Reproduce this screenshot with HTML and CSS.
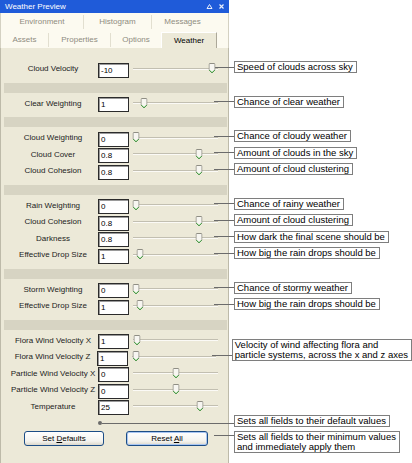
FILE: index.html
```html
<!DOCTYPE html>
<html>
<head>
<meta charset="utf-8">
<link rel="stylesheet" href="styles.css">
</head>
<body>
<div class="panel">
  <div class="titlebar">
    <span class="title">Weather Preview</span>
    <span class="tb-icons">
      <svg width="7" height="7" viewBox="0 0 7 7"><path d="M3.5 1.5L6 5.5H1z" fill="none" stroke="#e8eefc" stroke-width="1"/></svg>
      <svg width="7" height="7" viewBox="0 0 7 7"><path d="M1.5 1.5l4 4M5.5 1.5l-4 4" stroke="#e8eefc" stroke-width="1.2"/></svg>
    </span>
  </div>
  <div class="tabs">
    <div class="tabrow">
      <span class="tab tab-first tab-env">Environment</span>
      <span class="tab tab-hist">Histogram</span>
      <span class="tab tab-msg">Messages</span>
    </div>
    <div class="tabrow tabrow-bottom">
      <span class="tab tab-first tab-assets">Assets</span>
      <span class="tab tab-props">Properties</span>
      <span class="tab tab-opts">Options</span>
      <span class="tab tab-active">Weather</span>
    </div>
  </div>
  <div class="body">
    <div class="group">
      <div class="row">
        <span class="label">Cloud Velocity</span><span class="field">-10</span>
        <span class="slider"><span class="track"></span><span class="rail"><span class="thumb" style="left:96%"><svg width="7" height="11" viewBox="0 0 7 11"><path d="M1.5 0.5h4a1 1 0 0 1 1 1v5.5l-3 3-3-3v-5.5a1 1 0 0 1 1-1z" fill="#f7f6f1" stroke="#8f8e84"/><path d="M1 7.2l2.5 2.5 2.5-2.5" fill="none" stroke="#2fa52f"/></svg></span></span></span>
        <span class="note"><span class="leader"></span><span class="callout">Speed of clouds across sky</span></span>
      </div>
    </div>
    <div class="sep"></div>
    <div class="group">
      <div class="row">
        <span class="label">Clear Weighting</span><span class="field">1</span>
        <span class="slider"><span class="track"></span><span class="rail"><span class="thumb" style="left:10%"><svg width="7" height="11" viewBox="0 0 7 11"><path d="M1.5 0.5h4a1 1 0 0 1 1 1v5.5l-3 3-3-3v-5.5a1 1 0 0 1 1-1z" fill="#f7f6f1" stroke="#8f8e84"/><path d="M1 7.2l2.5 2.5 2.5-2.5" fill="none" stroke="#2fa52f"/></svg></span></span></span>
        <span class="note"><span class="leader"></span><span class="callout">Chance of clear weather</span></span>
      </div>
    </div>
    <div class="sep"></div>
    <div class="group">
      <div class="row">
        <span class="label">Cloud Weighting</span><span class="field">0</span>
        <span class="slider"><span class="track"></span><span class="rail"><span class="thumb" style="left:0%"><svg width="7" height="11" viewBox="0 0 7 11"><path d="M1.5 0.5h4a1 1 0 0 1 1 1v5.5l-3 3-3-3v-5.5a1 1 0 0 1 1-1z" fill="#f7f6f1" stroke="#8f8e84"/><path d="M1 7.2l2.5 2.5 2.5-2.5" fill="none" stroke="#2fa52f"/></svg></span></span></span>
        <span class="note"><span class="leader"></span><span class="callout">Chance of cloudy weather</span></span>
      </div>
      <div class="row">
        <span class="label">Cloud Cover</span><span class="field">0.8</span>
        <span class="slider"><span class="track"></span><span class="rail"><span class="thumb" style="left:80%"><svg width="7" height="11" viewBox="0 0 7 11"><path d="M1.5 0.5h4a1 1 0 0 1 1 1v5.5l-3 3-3-3v-5.5a1 1 0 0 1 1-1z" fill="#f7f6f1" stroke="#8f8e84"/><path d="M1 7.2l2.5 2.5 2.5-2.5" fill="none" stroke="#2fa52f"/></svg></span></span></span>
        <span class="note"><span class="leader"></span><span class="callout">Amount of clouds in the sky</span></span>
      </div>
      <div class="row">
        <span class="label">Cloud Cohesion</span><span class="field">0.8</span>
        <span class="slider"><span class="track"></span><span class="rail"><span class="thumb" style="left:80%"><svg width="7" height="11" viewBox="0 0 7 11"><path d="M1.5 0.5h4a1 1 0 0 1 1 1v5.5l-3 3-3-3v-5.5a1 1 0 0 1 1-1z" fill="#f7f6f1" stroke="#8f8e84"/><path d="M1 7.2l2.5 2.5 2.5-2.5" fill="none" stroke="#2fa52f"/></svg></span></span></span>
        <span class="note"><span class="leader"></span><span class="callout">Amount of cloud clustering</span></span>
      </div>
    </div>
    <div class="sep"></div>
    <div class="group">
      <div class="row">
        <span class="label">Rain Weighting</span><span class="field">0</span>
        <span class="slider"><span class="track"></span><span class="rail"><span class="thumb" style="left:0%"><svg width="7" height="11" viewBox="0 0 7 11"><path d="M1.5 0.5h4a1 1 0 0 1 1 1v5.5l-3 3-3-3v-5.5a1 1 0 0 1 1-1z" fill="#f7f6f1" stroke="#8f8e84"/><path d="M1 7.2l2.5 2.5 2.5-2.5" fill="none" stroke="#2fa52f"/></svg></span></span></span>
        <span class="note"><span class="leader"></span><span class="callout">Chance of rainy weather</span></span>
      </div>
      <div class="row">
        <span class="label">Cloud Cohesion</span><span class="field">0.8</span>
        <span class="slider"><span class="track"></span><span class="rail"><span class="thumb" style="left:80%"><svg width="7" height="11" viewBox="0 0 7 11"><path d="M1.5 0.5h4a1 1 0 0 1 1 1v5.5l-3 3-3-3v-5.5a1 1 0 0 1 1-1z" fill="#f7f6f1" stroke="#8f8e84"/><path d="M1 7.2l2.5 2.5 2.5-2.5" fill="none" stroke="#2fa52f"/></svg></span></span></span>
        <span class="note"><span class="leader"></span><span class="callout">Amount of cloud clustering</span></span>
      </div>
      <div class="row">
        <span class="label">Darkness</span><span class="field">0.8</span>
        <span class="slider"><span class="track"></span><span class="rail"><span class="thumb" style="left:80%"><svg width="7" height="11" viewBox="0 0 7 11"><path d="M1.5 0.5h4a1 1 0 0 1 1 1v5.5l-3 3-3-3v-5.5a1 1 0 0 1 1-1z" fill="#f7f6f1" stroke="#8f8e84"/><path d="M1 7.2l2.5 2.5 2.5-2.5" fill="none" stroke="#2fa52f"/></svg></span></span></span>
        <span class="note"><span class="leader"></span><span class="callout">How dark the final scene should be</span></span>
      </div>
      <div class="row">
        <span class="label">Effective Drop Size</span><span class="field">1</span>
        <span class="slider"><span class="track"></span><span class="rail"><span class="thumb" style="left:5%"><svg width="7" height="11" viewBox="0 0 7 11"><path d="M1.5 0.5h4a1 1 0 0 1 1 1v5.5l-3 3-3-3v-5.5a1 1 0 0 1 1-1z" fill="#f7f6f1" stroke="#8f8e84"/><path d="M1 7.2l2.5 2.5 2.5-2.5" fill="none" stroke="#2fa52f"/></svg></span></span></span>
        <span class="note"><span class="leader"></span><span class="callout">How big the rain drops should be</span></span>
      </div>
    </div>
    <div class="sep"></div>
    <div class="group">
      <div class="row">
        <span class="label">Storm Weighting</span><span class="field">0</span>
        <span class="slider"><span class="track"></span><span class="rail"><span class="thumb" style="left:0%"><svg width="7" height="11" viewBox="0 0 7 11"><path d="M1.5 0.5h4a1 1 0 0 1 1 1v5.5l-3 3-3-3v-5.5a1 1 0 0 1 1-1z" fill="#f7f6f1" stroke="#8f8e84"/><path d="M1 7.2l2.5 2.5 2.5-2.5" fill="none" stroke="#2fa52f"/></svg></span></span></span>
        <span class="note"><span class="leader"></span><span class="callout">Chance of stormy weather</span></span>
      </div>
      <div class="row">
        <span class="label">Effective Drop Size</span><span class="field">1</span>
        <span class="slider"><span class="track"></span><span class="rail"><span class="thumb" style="left:5%"><svg width="7" height="11" viewBox="0 0 7 11"><path d="M1.5 0.5h4a1 1 0 0 1 1 1v5.5l-3 3-3-3v-5.5a1 1 0 0 1 1-1z" fill="#f7f6f1" stroke="#8f8e84"/><path d="M1 7.2l2.5 2.5 2.5-2.5" fill="none" stroke="#2fa52f"/></svg></span></span></span>
        <span class="note"><span class="leader"></span><span class="callout">How big the rain drops should be</span></span>
      </div>
    </div>
    <div class="sep"></div>
    <div class="group group-last">
      <div class="row">
        <span class="label">Flora Wind Velocity X</span><span class="field">1</span>
        <span class="slider"><span class="track"></span><span class="rail"><span class="thumb" style="left:1%"><svg width="7" height="11" viewBox="0 0 7 11"><path d="M1.5 0.5h4a1 1 0 0 1 1 1v5.5l-3 3-3-3v-5.5a1 1 0 0 1 1-1z" fill="#f7f6f1" stroke="#8f8e84"/><path d="M1 7.2l2.5 2.5 2.5-2.5" fill="none" stroke="#2fa52f"/></svg></span></span></span>
      </div>
      <div class="row">
        <span class="label">Flora Wind Velocity Z</span><span class="field">1</span>
        <span class="slider"><span class="track"></span><span class="rail"><span class="thumb" style="left:1%"><svg width="7" height="11" viewBox="0 0 7 11"><path d="M1.5 0.5h4a1 1 0 0 1 1 1v5.5l-3 3-3-3v-5.5a1 1 0 0 1 1-1z" fill="#f7f6f1" stroke="#8f8e84"/><path d="M1 7.2l2.5 2.5 2.5-2.5" fill="none" stroke="#2fa52f"/></svg></span></span></span>
        <span class="note"><span class="leader"></span><span class="callout callout-raised">Velocity of wind affecting flora and<br>particle systems, across the x and z axes</span></span>
      </div>
      <div class="row">
        <span class="label">Particle Wind Velocity X</span><span class="field">0</span>
        <span class="slider"><span class="track"></span><span class="rail"><span class="thumb" style="left:51%"><svg width="7" height="11" viewBox="0 0 7 11"><path d="M1.5 0.5h4a1 1 0 0 1 1 1v5.5l-3 3-3-3v-5.5a1 1 0 0 1 1-1z" fill="#f7f6f1" stroke="#8f8e84"/><path d="M1 7.2l2.5 2.5 2.5-2.5" fill="none" stroke="#2fa52f"/></svg></span></span></span>
      </div>
      <div class="row">
        <span class="label">Particle Wind Velocity Z</span><span class="field">0</span>
        <span class="slider"><span class="track"></span><span class="rail"><span class="thumb" style="left:51%"><svg width="7" height="11" viewBox="0 0 7 11"><path d="M1.5 0.5h4a1 1 0 0 1 1 1v5.5l-3 3-3-3v-5.5a1 1 0 0 1 1-1z" fill="#f7f6f1" stroke="#8f8e84"/><path d="M1 7.2l2.5 2.5 2.5-2.5" fill="none" stroke="#2fa52f"/></svg></span></span></span>
      </div>
      <div class="row">
        <span class="label">Temperature</span><span class="field">25</span>
        <span class="slider"><span class="track"></span><span class="rail"><span class="thumb" style="left:81%"><svg width="7" height="11" viewBox="0 0 7 11"><path d="M1.5 0.5h4a1 1 0 0 1 1 1v5.5l-3 3-3-3v-5.5a1 1 0 0 1 1-1z" fill="#f7f6f1" stroke="#8f8e84"/><path d="M1 7.2l2.5 2.5 2.5-2.5" fill="none" stroke="#2fa52f"/></svg></span></span></span>
      </div>
    </div>
    <div class="defaults-row">
      <span class="dot"></span><span class="leader leader-long"></span><span class="callout">Sets all fields to their default values</span>
    </div>
    <div class="button-row">
      <span class="btn">Set <u>D</u>efaults</span>
      <span class="btn btn-default">Reset <u>A</u>ll</span>
      <span class="note note-top"><span class="leader"></span><span class="callout">Sets all fields to their minimum values<br>and immediately apply them</span></span>
    </div>
  </div>
</div>
</body>
</html>
```
FILE: styles.css
```css
body {
  margin: 0;
  background: #ffffff;
  font-family: "Liberation Sans", Arial, sans-serif;
  font-size: 8px;
  color: #1a1a1a;
}

.panel {
  width: 229px;
}

/* title bar */
.titlebar {
  height: 13px;
  background: #1f5bd9;
  color: #ffffff;
  display: flex;
  align-items: center;
  padding: 0 4px 0 5px;
}
.title {
  flex: 1;
  line-height: 13px;
}
.tb-icons {
  display: flex;
  align-items: center;
  gap: 5px;
}
.tb-icons svg {
  display: block;
}

/* tabs */
.tabs {
  background: #fcfaf0;
  border-left: 1px solid #d4d1c2;
  border-right: 1px solid #d4d1c2;
  height: 35px;
}
.tabrow {
  display: flex;
  align-items: center;
  height: 18px;
}
.tabrow-bottom {
  height: 17px;
}
.tab {
  box-sizing: border-box;
  height: 14px;
  line-height: 14px;
  text-align: center;
  color: #8f8c80;
  border-left: 1px solid #e2dfd0;
  white-space: nowrap;
}
.tab-first {
  border-left: 0;
}
.tab-env { width: 82px; }
.tab-hist { width: 68px; }
.tab-msg { width: 62px; }
.tab-assets { width: 47px; }
.tab-props { width: 62px; }
.tab-opts { width: 51px; }
.tab-active {
  width: 56px;
  height: 16px;
  line-height: 15px;
  align-self: flex-end;
  background: #ece9d8;
  color: #000000;
  border-left: 1px solid #ffffff;
  border-top: 1px solid #ffffff;
  border-right: 1px solid #aca899;
}

/* body */
.body {
  background: #ece9d8;
  border: 1px solid #bdbaa9;
  border-top: 0;
  padding: 10px 0 12px 0;
}
.group {
  padding: 4px 0;
}
.group-last {
  padding-bottom: 0;
}
.sep {
  height: 10px;
  margin: 0 1px 0 3px;
  background: #d7d4c3;
}

.row {
  width: 411px;
  height: 16.5px;
  display: flex;
  align-items: center;
}
.label {
  box-sizing: border-box;
  width: 96px;
  padding-left: 8px;
  text-align: center;
  white-space: nowrap;
  color: #222222;
  margin-bottom: 3px;
}
.field {
  box-sizing: border-box;
  width: 31px;
  height: 15px;
  margin-left: 1px;
  padding-left: 2px;
  line-height: 13px;
  background: #ffffff;
  border: 1px solid #2b2b2b;
  box-shadow: inset 1px 1px 0 #9a9a9a;
  color: #000000;
}

/* slider */
.slider {
  position: relative;
  width: 85px;
  height: 11px;
  margin-left: 4px;
  margin-bottom: 3px;
  display: flex;
  align-items: center;
}
.track {
  flex: 1;
  height: 1px;
  background: #c2bfb1;
  border-bottom: 1px solid #fbfaf6;
}
.rail {
  position: absolute;
  left: 3px;
  right: 3px;
  top: 0;
  bottom: 0;
}
.thumb {
  position: absolute;
  top: 0;
  transform: translateX(-50%);
  line-height: 0;
}
.thumb svg {
  display: block;
}

/* annotations */
.note {
  display: flex;
  align-items: center;
  margin-left: -4px;
  margin-bottom: 6px;
}
.leader {
  display: block;
  width: 20px;
  height: 1px;
  background: #6b6b6b;
}
.callout {
  display: block;
  border: 1px solid #7e7e7e;
  background: #ffffff;
  padding: 0 3px 0 2px;
  font-size: 9.5px;
  line-height: 10px;
  color: #000000;
  white-space: nowrap;
}
.callout-raised {
  margin-bottom: 11px;
}

.defaults-row {
  width: 411px;
  height: 14px;
  display: flex;
  align-items: center;
}
.dot {
  width: 4px;
  height: 4px;
  border-radius: 50%;
  background: #6b6b6b;
  margin-left: 97px;
}
.leader-long {
  width: 132px;
}
.defaults-row .callout {
  margin-bottom: 4px;
}

.button-row {
  width: 411px;
  display: flex;
  align-items: flex-start;
  margin-top: 1px;
  padding-left: 23px;
  box-sizing: border-box;
}
.btn {
  box-sizing: border-box;
  width: 80px;
  height: 15px;
  line-height: 13px;
  text-align: center;
  border: 1px solid #1c4d86;
  border-radius: 3px;
  background: linear-gradient(#ffffff, #f4f3ee 70%, #dcd8cc);
  color: #000000;
}
.btn u {
  text-decoration: underline;
}
.btn-default {
  width: 82px;
  margin-left: 22px;
  box-shadow: inset 0 0 0 1px #a9c6f2;
}
.note-top {
  align-items: flex-start;
  margin-left: 6px;
  margin-bottom: 0;
}
.note-top .leader {
  margin-top: 4px;
}
```
